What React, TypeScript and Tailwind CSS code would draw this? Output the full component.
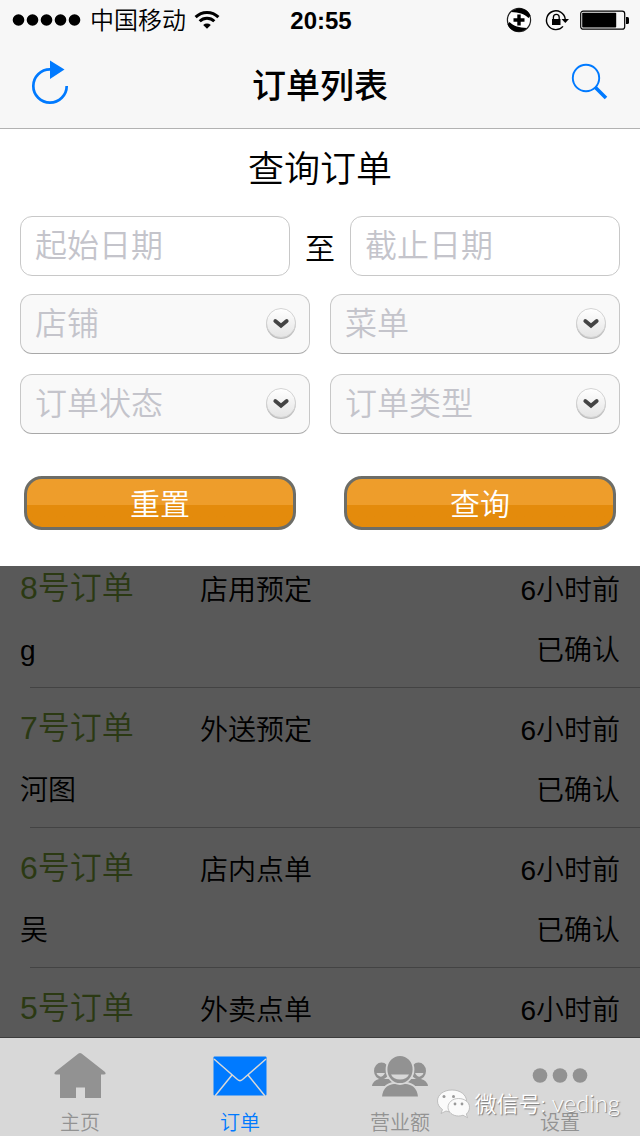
import React from 'react';

function Wifi() {
  return (
    <svg width="26" height="20" viewBox="0 0 26 20" aria-hidden="true">
      <path d="M13 18.800 9.200 15a5.600 5.600 0 0 1 7.600 0z" fill="#000" />
      <path d="M5.700 11.300a10.400 10.400 0 0 1 14.600 0M1.600 7.100a16.200 16.200 0 0 1 22.800 0" fill="none" stroke="#000" strokeWidth="3" />
    </svg>
  );
}

function StatusIcons() {
  return (
    <div className="flex items-center">
      <svg width="26" height="26" viewBox="0 0 26 26" aria-hidden="true">
        <circle cx="13" cy="13" r="11.600" fill="#fff" stroke="#222" strokeWidth="1.200" />
        <path d="M5 5C10-0.500 21 0 24.500 8.500L22.500 11C18 6.500 13 5.500 5 5zM21 21C16 26.500 5 26 1.500 17.500L3.500 15C8 19.500 13 20.500 21 21z" fill="#000" />
        <path d="M13 7.500v11M7.500 13h11" stroke="#000" strokeWidth="3.400" />
      </svg>
      <svg className="ml-3" width="26" height="26" viewBox="0 0 26 26" aria-hidden="true">
        <path d="M19 19.400A9.400 9.400 0 1 1 21.200 12" fill="none" stroke="#000" strokeWidth="1.400" />
        <path d="M17.500 12h7.500l-3.700 4z" fill="#000" />
        <rect x="8" y="12" width="8.500" height="6" fill="#000" />
        <path d="M9.400 12.500v-2.200a2.900 2.900 0 0 1 5.800 0v2.200" fill="none" stroke="#000" strokeWidth="1.300" />
      </svg>
      <svg className="ml-2.5" width="50" height="22" viewBox="0 0 50 22" aria-hidden="true">
        <rect x="0.700" y="2.200" width="44" height="18" rx="2.500" fill="none" stroke="#000" strokeWidth="1.200" />
        <rect x="2.200" y="3.800" width="34" height="14.800" rx="0.800" fill="#000" />
        <path d="M46 8h1.500q1.500 0 1.500 1.500v4q0 1.500-1.500 1.500H46z" fill="#000" />
      </svg>
    </div>
  );
}

function StatusBar() {
  return (
    <div className="grid h-10 grid-cols-[1fr_auto_1fr] items-center pr-2.5 pl-3">
      <div className="flex items-center">
        <svg width="70" height="14" viewBox="0 0 70 14" aria-hidden="true">
          {[6.5, 20.5, 34.5, 48.5, 62.5].map((x) => (
            <circle key={x} cx={x} cy="7" r="5.800" fill="#000" />
          ))}
        </svg>
        <span className="ml-2 pt-0.5 text-2xl font-[350]">中国移动</span>
        <span className="ml-2"><Wifi /></span>
      </div>
      <time className="pt-0.5 text-2xl font-bold">20:55</time>
      <div className="flex justify-end"><StatusIcons /></div>
    </div>
  );
}

function NavBar() {
  return (
    <div className="flex h-22 items-center justify-between px-7">
      <button type="button" aria-label="刷新">
        <svg width="44" height="48" viewBox="0 0 44 48" fill="none">
          <path d="M22 9.300A16.700 16.700 0 1 0 38.700 26" stroke="#007aff" strokeWidth="2.700" />
          <path d="M22 0.500v18.500l14.500-9.500z" fill="#007aff" />
        </svg>
      </button>
      <h1 className="pt-1 text-[34px] font-medium">订单列表</h1>
      <button type="button" aria-label="搜索">
        <svg width="44" height="44" viewBox="0 0 44 44" fill="none">
          <circle cx="18" cy="16" r="13.200" stroke="#007aff" strokeWidth="1.900" />
          <path d="m27.200 25.200 10.800 10.800" stroke="#007aff" strokeWidth="3.600" />
        </svg>
      </button>
    </div>
  );
}

function DateField({ label }: { label: string }) {
  return (
    <input
      type="text"
      aria-label={label}
      placeholder={label}
      className="h-15 w-full min-w-0 rounded-xl border border-[#c8c8c8] bg-white px-3.5 text-[32px] font-[350] placeholder:text-[#c4c4cb]"
    />
  );
}

function SelectField({ label }: { label: string }) {
  return (
    <div className="relative">
      <select
        aria-label={label}
        className="h-15 w-full appearance-none rounded-xl border border-[#c8c8c8] border-b-[#a8a8a8] bg-[#f9f9f9] px-3.5 text-[32px] font-[350] text-[#c4c4cb]"
      >
        <option>{label}</option>
      </select>
      <svg className="pointer-events-none absolute top-3 right-3" width="34" height="36" viewBox="0 0 34 36" aria-hidden="true">
        <defs>
          <linearGradient id="knob" x1="0" y1="0" x2="0" y2="1">
            <stop offset="0" stopColor="#fff" />
            <stop offset="1" stopColor="#e4e4e4" />
          </linearGradient>
        </defs>
        <circle cx="17" cy="18.200" r="14.800" fill="#bdbdbd" />
        <circle cx="17" cy="17" r="14.500" fill="url(#knob)" stroke="#cfcfcf" strokeWidth="0.900" />
        <path d="m11.300 15 5.700 4.800 5.700-4.800" fill="none" stroke="#444" strokeWidth="3.800" strokeLinecap="round" />
      </svg>
    </div>
  );
}

function OrangeButton({ label }: { label: string }) {
  return (
    <button
      type="button"
      className="h-[54px] rounded-[18px] border-3 border-[#6d6d67] bg-linear-to-b from-[#ee9d2b] from-54% to-[#e48b0c] to-54% pt-1 text-[30px] leading-10 font-[350] text-white"
    >
      {label}
    </button>
  );
}

function SearchPanel() {
  return (
    <form className="bg-white pb-9">
      <h2 className="pt-3.5 text-center text-4xl leading-[53px] font-[350]">查询订单</h2>
      <div className="mt-5 flex items-center px-5">
        <div className="min-w-0 flex-1"><DateField label="起始日期" /></div>
        <span className="w-15 pt-1 text-center text-[30px] font-[350]">至</span>
        <div className="min-w-0 flex-1"><DateField label="截止日期" /></div>
      </div>
      <div className="mt-4.5 grid grid-cols-2 gap-5 px-5">
        <SelectField label="店铺" />
        <SelectField label="菜单" />
        <SelectField label="订单状态" />
        <SelectField label="订单类型" />
      </div>
      <div className="mt-[42px] grid grid-cols-2 gap-12 px-6">
        <OrangeButton label="重置" />
        <OrangeButton label="查询" />
      </div>
    </form>
  );
}

const orders = [
  { id: 8, kind: '店用预定', customer: 'g', status: '已确认' },
  { id: 7, kind: '外送预定', customer: '河图', status: '已确认' },
  { id: 6, kind: '店内点单', customer: '吴', status: '已确认' },
  { id: 5, kind: '外卖点单' },
];

function OrderList() {
  return (
    <main className="min-h-0 flex-1 overflow-hidden bg-[#595959]">
      <ul className="-mt-4.5">
        {orders.map((o) => (
          <li key={o.id}>
            <div className="grid h-[139px] grid-cols-[180px_1fr_auto] content-start px-5 pt-2.5 text-[28px] leading-[60px] font-[350]">
              <span className="text-[32px] text-[#2b3913]">{o.id}号订单</span>
              <span className="pt-[3px]">{o.kind}</span>
              <span className="pt-[3px]">6小时前</span>
              {o.customer && <span className="col-span-2">{o.customer}</span>}
              {o.status && <span className="text-right">{o.status}</span>}
            </div>
            <div className="ml-7.5 h-px bg-[#434343]" />
          </li>
        ))}
      </ul>
    </main>
  );
}

function HomeIcon() {
  return (
    <svg width="56" height="50" viewBox="0 0 56 50" aria-hidden="true">
      <path d="M26.500 2.500q1.500-1.200 3 0L53 21q1.500 2.500-1 2.500H49V47H33V36.500h-9V47H8V23.500H4q-2.500 0-1-2.500z" fill="#929292" />
    </svg>
  );
}

function MailIcon() {
  return (
    <svg width="56" height="50" viewBox="0 0 56 50" aria-hidden="true">
      <rect x="1.500" y="5.500" width="53" height="39" rx="1" fill="#007aff" />
      <path d="m2 8 23.500 20.500q2.500 2.200 5 0L54 8M20 24 3 45M36 24l17 21" fill="none" stroke="#d8d8d8" strokeWidth="1.500" />
    </svg>
  );
}

function PeopleIcon() {
  return (
    <svg width="60" height="50" viewBox="0 0 60 50" aria-hidden="true">
      <g fill="#929292">
        <ellipse cx="11.500" cy="20" rx="7.500" ry="8.500" />
        <ellipse cx="48.500" cy="20" rx="7.500" ry="8.500" />
        <path d="M2 35q1-5.500 7-7h14v7zM58 35q-1-5.500-7-7H37v7z" />
      </g>
      <path d="M6.500 22h8.500q-2 4-5 3.600-2.800-.6-3.500-3.600zM53.500 22H45q2 4 5 3.600 2.800-.6 3.500-3.600z" fill="#d8d8d8" />
      <g fill="#929292" stroke="#d8d8d8" strokeWidth="1.800">
        <path d="M11 46.400C12 35 18 31.500 30 31.500S48 35 49 46.400z" />
        <ellipse cx="30" cy="18.500" rx="13.500" ry="14.500" />
      </g>
      <path d="M21 23.500h18q-2.500 5-9 5t-9-5z" fill="#d8d8d8" />
    </svg>
  );
}

function MoreIcon() {
  return (
    <svg width="60" height="50" viewBox="0 0 60 50" aria-hidden="true">
      <g fill="#929292">
        <circle cx="10" cy="24.500" r="7.300" />
        <circle cx="30" cy="24.500" r="7.300" />
        <circle cx="50" cy="24.500" r="7.300" />
      </g>
    </svg>
  );
}

const tabs = [
  { label: '主页', icon: HomeIcon, active: false },
  { label: '订单', icon: MailIcon, active: true },
  { label: '营业额', icon: PeopleIcon, active: false },
  { label: '设置', icon: MoreIcon, active: false },
];

function Watermark() {
  return (
    <div className="pointer-events-none absolute right-5 bottom-4 flex items-center text-white">
      <svg width="34" height="32" viewBox="0 0 34 32" aria-hidden="true">
        <g fill="#fafafa" stroke="#b4b4b4" strokeWidth="0.800">
          <path d="M16 2C7.500 2 1.500 6.800 1.500 13c0 3.500 2 6.500 5 8.500L5 25.500l5-2.500q3 1 6 1c8.500 0 14.500-5 14.500-11S24.500 2 16 2z" />
          <path d="M22.500 10.500c-6 0-10.500 4-10.500 8.800s4.500 8.700 10.500 8.700q2.500 0 4.500-.8l4.500 2.500-1.200-3.700c2-1.600 3.200-4 3.200-6.700 0-4.800-4.500-8.800-11-8.800z" />
        </g>
        <g fill="#999">
          <circle cx="8" cy="8.500" r="1.500" /><circle cx="17.500" cy="8.500" r="1.500" />
          <circle cx="19" cy="16" r="1.400" /><circle cx="26" cy="16" r="1.400" />
        </g>
      </svg>
      <span className="ml-1 font-[Lato,'Noto_Sans_CJK_SC',sans-serif] text-[22px] leading-8 font-[350] text-shadow-[1px_1px_1px_#777]">微信号: <span className="text-2xl leading-8">veding</span></span>
    </div>
  );
}

function TabBar() {
  return (
    <footer className="relative border-t border-[#3c3c3c] bg-[#d8d8d8]">
      <nav className="grid h-[98px] grid-cols-4">
        {tabs.map(({ label, icon: Icon, active }) => (
          <a
            key={label}
            href="#"
            className={
              'flex flex-col items-center pt-[13px] text-xl leading-6 font-[350] ' +
              (active ? 'text-[#007aff]' : 'text-[#929292]')
            }
          >
            <Icon />
            <span className="mt-2.5">{label}</span>
          </a>
        ))}
      </nav>
      <Watermark />
    </footer>
  );
}

export default function App() {
  return (
    <div className="flex h-screen flex-col bg-white font-['Liberation_Sans','Noto_Sans_CJK_SC',sans-serif] text-black">
      <header className="border-b border-[#b2b2b2] bg-[#f7f7f7]">
        <StatusBar />
        <NavBar />
      </header>
      <SearchPanel />
      <OrderList />
      <TabBar />
    </div>
  );
}
